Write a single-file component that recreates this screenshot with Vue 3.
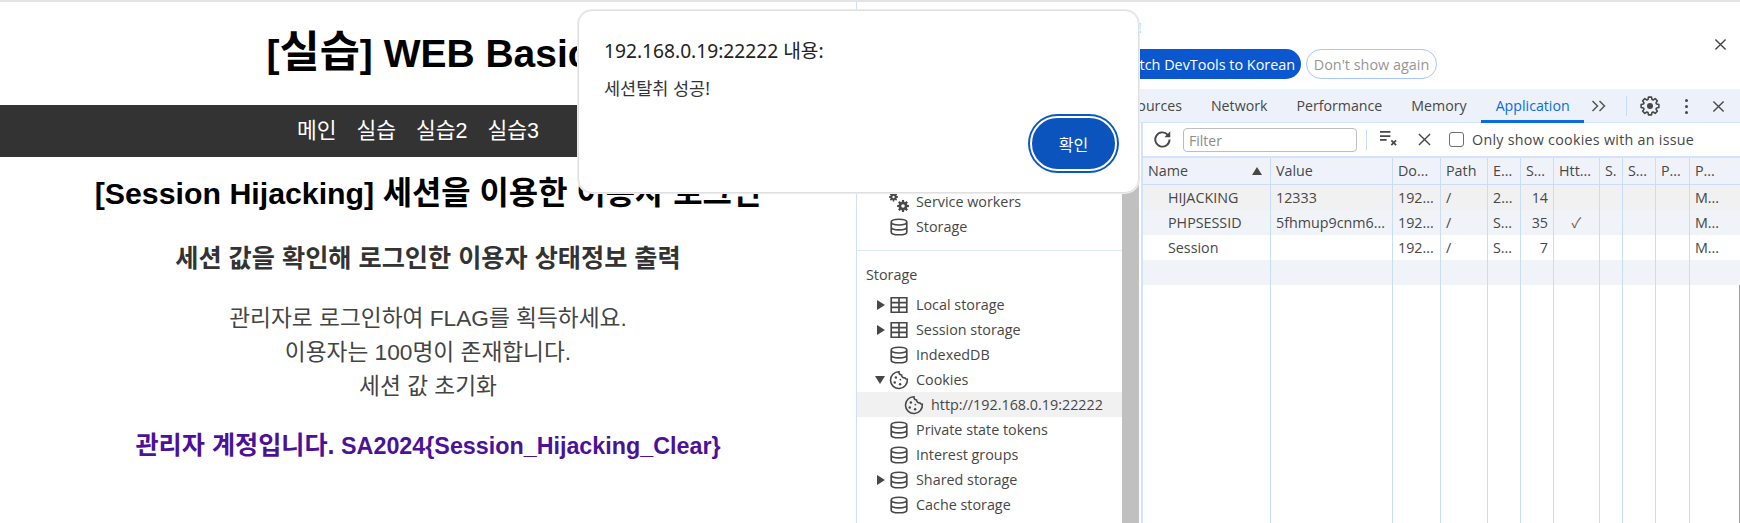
<template>
  <div class="screen">
    <svg class="defs" aria-hidden="true">
      <symbol id="i-db" viewBox="0 0 18 18">
        <path d="M2 4.600C2 2.900 5 2 9 2s7 .9 7 2.600v8.800c0 1.700-3 2.600-7 2.600s-7-.9-7-2.600z M2 4.600c0 1.700 3 2.600 7 2.600s7-.9 7-2.600 M2 9c0 1.700 3 2.600 7 2.600s7-.9 7-2.600" fill="none" stroke="#474747" stroke-width="1.500" />
      </symbol>
      <symbol id="i-table" viewBox="0 0 18 18">
        <path d="M2 2.500h14v13H2z M2 6.800h14 M2 11.100h14 M9 2.500v13" fill="none" stroke="#474747" stroke-width="1.500" />
      </symbol>
      <symbol id="i-cookie" viewBox="0 0 18 18">
        <path d="M9 1.500c-.3 1.900 1 3 2.300 3 0 1.600 1.300 2.800 3 2.600.5 1 1.300 1.300 2.200 1.200A7.600 7.600 0 1 1 9 1.500z" fill="none" stroke="#474747" stroke-width="1.400" />
        <circle cx="6.200" cy="6.800" r="1.100" fill="#474747" />
        <circle cx="5.200" cy="11.200" r="1.100" fill="#474747" />
        <circle cx="10" cy="12.800" r="1.100" fill="#474747" />
        <circle cx="10.200" cy="8.600" r=".8" fill="#474747" />
      </symbol>
      <symbol id="i-gears" viewBox="0 0 20 20">
        <path :d="gearPath(4.500, 5, 4.500, 3.200)" fill="#474747" />
        <circle cx="4.500" cy="5" r="1.200" fill="#fff" />
        <path :d="gearPath(14, 14, 6, 4.300)" fill="#474747" />
        <circle cx="14" cy="14" r="1.800" fill="#fff" />
      </symbol>
    </svg>

    <main class="page">
      <h1>[<span class="ko">실습</span>] WEB Basic</h1>
      <nav class="menu">
        <a v-for="link in menu" :key="link">{{ link }}</a>
      </nav>
      <h2>[Session Hijacking] <span class="ko">세션을 이용한 이용자 로그인</span></h2>
      <h3>세션 값을 확인해 로그인한 이용자 상태정보 출력</h3>
      <p class="guide">관리자로 로그인하여 FLAG를 획득하세요.</p>
      <p class="guide">이용자는 100명이 존재합니다.</p>
      <p class="guide">세션 값 초기화</p>
      <p class="flag"><span class="ko">관리자 계정입니다.</span> SA2024{Session_Hijacking_Clear}</p>
    </main>

    <section class="devtools">
      <div class="infobar">
        <p class="info-text">DevTools is now available in Korean!</p>
        <div class="info-actions">
          <button class="switch">Switch DevTools to Korean</button>
          <button class="dismiss">Don't show again</button>
        </div>
        <svg class="info-close" viewBox="0 0 14 14"><path d="M1.500 1.500l11 11M12.500 1.500l-11 11" stroke="#444" stroke-width="1.500" /></svg>
      </div>

      <div class="tabs">
        <span v-for="tab in tabs" :key="tab" class="tab" :class="{ active: tab === 'Application' }">{{ tab }}</span>
        <svg class="more" viewBox="0 0 16 12"><path d="M1.500 1l5 5-5 5M8.500 1l5 5-5 5" fill="none" stroke="#555" stroke-width="1.500" /></svg>
        <i class="tab-sep"></i>
        <svg class="gear" viewBox="0 0 20 20">
          <path :d="gearPath(10, 10, 9, 6.800)" fill="none" stroke="#474747" stroke-width="1.600" stroke-linejoin="round" />
          <circle cx="10" cy="10" r="3" fill="#474747" />
        </svg>
        <span class="dots"><i></i><i></i><i></i></span>
        <svg class="tabs-close" viewBox="0 0 14 14"><path d="M1.500 1.500l11 11M12.500 1.500l-11 11" stroke="#474747" stroke-width="1.500" /></svg>
      </div>

      <div class="panel">
        <aside class="sidebar">
          <div class="tree-row"><svg class="tree-icon"><use href="#i-gears" /></svg><span>Service workers</span></div>
          <div class="tree-row"><svg class="tree-icon"><use href="#i-db" /></svg><span>Storage</span></div>
          <div class="tree-sep"></div>
          <div class="tree-title">Storage</div>
          <div v-for="row in storage" :key="row.label" class="tree-row" :class="{ current: row.child }">
            <i v-if="row.arrow" class="arrow" :class="row.arrow"></i>
            <svg class="tree-icon" :class="{ nested: row.child }"><use :href="'#i-' + row.icon" /></svg>
            <span>{{ row.label }}</span>
          </div>
        </aside>
        <div class="scrollbar"></div>

        <div class="cookies">
          <div class="toolbar">
            <svg class="reload" viewBox="0 0 20 20"><path d="M16.700 10a6.800 6.800 0 1 1-1.700-4.500" fill="none" stroke="#474747" stroke-width="1.800" /><path d="M17.400 2.200v5.600h-5.600z" fill="#474747" /></svg>
            <div class="filter">Filter</div>
            <i class="tool-sep"></i>
            <svg class="clear" viewBox="0 0 20 18"><path d="M1 1h11M1 5.500h11M1 9.500h7" stroke="#474747" stroke-width="1.800" /><path d="M13 10l5 5M18 10l-5 5" stroke="#474747" stroke-width="1.800" /></svg>
            <svg class="tool-close" viewBox="0 0 14 14"><path d="M1 1l12 12M13 1 1 13" stroke="#474747" stroke-width="1.500" /></svg>
            <i class="check"></i>
            <span class="check-label">Only show cookies with an issue</span>
          </div>

          <div class="grid">
            <div class="grid-row head">
              <span v-for="(col, i) in columns" :key="i" class="cell">
                {{ col }}<i v-if="i === 0" class="sort"></i>
              </span>
            </div>
            <div v-for="(row, r) in cookies" :key="r" class="grid-row" :class="row.cls">
              <span v-for="(value, i) in row.cells" :key="i" class="cell" :class="{ name: i === 0, size: i === 5, http: i === 6 }">{{ value }}</span>
            </div>
            <div class="grid-row filler">
              <span v-for="(col, i) in columns" :key="i" class="cell"></span>
            </div>
          </div>
        </div>
      </div>
    </section>

    <div class="dialog">
      <div class="dialog-title">192.168.0.19:22222 내용:</div>
      <div class="dialog-message">세션탈취 성공!</div>
      <div class="dialog-actions">
        <button class="confirm">확인</button>
      </div>
    </div>
  </div>
</template>

<script setup>
const menu = ['메인', '실습', '실습2', '실습3']
const tabs = ['Elements', 'Console', 'Sources', 'Network', 'Performance', 'Memory', 'Application']

const storage = [
  { label: 'Local storage', icon: 'table', arrow: 'right' },
  { label: 'Session storage', icon: 'table', arrow: 'right' },
  { label: 'IndexedDB', icon: 'db' },
  { label: 'Cookies', icon: 'cookie', arrow: 'down' },
  { label: 'http://192.168.0.19:22222', icon: 'cookie', child: true },
  { label: 'Private state tokens', icon: 'db' },
  { label: 'Interest groups', icon: 'db' },
  { label: 'Shared storage', icon: 'db', arrow: 'right' },
  { label: 'Cache storage', icon: 'db' },
]

const columns = ['Name', 'Value', 'Do...', 'Path', 'E...', 'S...', 'Htt...', 'S.', 'S...', 'P...', 'P...']

const cookies = [
  { cls: 'selected', cells: ['HIJACKING', '12333', '192...', '/', '2...', '14', '', '', '', '', 'M...'] },
  { cls: 'stripe', cells: ['PHPSESSID', '5fhmup9cnm6...', '192...', '/', 'S...', '35', '✓', '', '', '', 'M...'] },
  { cls: '', cells: ['Session', '', '192...', '/', 'S...', '7', '', '', '', '', 'M...'] },
  { cls: 'stripe', cells: ['', '', '', '', '', '', '', '', '', '', ''] },
]

// eight-tooth cog outline
const gearPath = (cx, cy, outer, inner) => {
  const points = []
  for (let k = 0; k < 8; k++) {
    const a = (k * Math.PI) / 4
    const spots = [[inner, -0.3], [outer, -0.17], [outer, 0.17], [inner, 0.3]]
    for (const [r, d] of spots) {
      points.push((cx + r * Math.cos(a + d)).toFixed(2) + ' ' + (cy + r * Math.sin(a + d)).toFixed(2))
    }
  }
  return 'M' + points.join('L') + 'z'
}
</script>

<style>
html,
body {
  margin: 0;
  background: #fff;
  overflow: hidden;
}
</style>

<style scoped>
.screen {
  position: relative;
  display: flex;
  width: 1740px;
  height: 523px;
  overflow: hidden;
  border-top: 2px solid #e4e4e4;
  box-sizing: border-box;
  background: #fff;
}
.defs {
  position: absolute;
  width: 0;
  height: 0;
}

/* page on the left */
.page {
  width: 856px;
  flex: none;
  text-align: center;
  font-family: "Liberation Sans", "Noto Sans CJK KR", sans-serif;
  color: #333;
}
h1,
h2,
h3,
p {
  margin: 0;
}
h1 {
  height: 103px;
  line-height: 99px;
  font-size: 39px;
  color: #000;
}
h1 .ko {
  font-size: 1.120em;
}
.menu {
  display: flex;
  justify-content: center;
  gap: 20px;
  height: 52px;
  box-sizing: border-box;
  padding: 0 20px 5px 0;
  align-items: center;
  background: #333;
}
.menu a {
  color: #fff;
  font-size: 21.500px;
}
h2 {
  margin-top: 16px;
  height: 42px;
  line-height: 40px;
  font-size: 30.300px;
  color: #000;
}
h2 .ko {
  font-size: 1.053em;
}
h3 {
  margin-top: 25px;
  margin-bottom: 25px;
  line-height: 36px;
  font-size: 25.200px;
}
.guide {
  font-size: 22.700px;
  line-height: 34px;
  color: #444;
}
.flag {
  margin-top: 25px;
  height: 34px;
  line-height: 34px;
  font-size: 23.300px;
  font-weight: bold;
  color: #4b1199;
}
.flag .ko {
  font-size: 1.080em;
}

/* devtools on the right */
.devtools {
  flex: 1;
  display: flex;
  flex-direction: column;
  min-width: 0;
  border-left: 1px solid #cfe0f8;
  font-family: "Open Sans", "Noto Sans CJK KR", sans-serif;
  font-size: 13px;
  color: #474747;
}
.infobar {
  position: relative;
  height: 87px;
  box-sizing: border-box;
  padding-left: 40px;
}
.info-text {
  height: 47px;
  line-height: 52px;
  white-space: nowrap;
  text-indent: 8px;
  font-size: 14px;
  color: #222;
}
.info-actions {
  display: flex;
  justify-content: flex-end;
  gap: 5px;
  width: 540px;
}
.switch,
.dismiss {
  height: 30px;
  border-radius: 15px;
  font: inherit;
  font-size: 14.400px;
  padding: 0;
  white-space: nowrap;
}
.switch {
  width: 190px;
  border: 0;
  background: #0b57d0;
  color: #fff;
}
.dismiss {
  width: 131px;
  background: #fff;
  border: 1px solid #a8c7fa;
  color: #969696;
}
.info-close {
  position: absolute;
  right: 13px;
  top: 36px;
  width: 13px;
  height: 13px;
}
.tabs {
  display: flex;
  align-items: center;
  height: 34px;
  flex: none;
  padding-left: 86px;
  background: #edf2fa;
  box-shadow: inset 0 -1px #d3e3fb;
  white-space: nowrap;
}
.tab {
  height: 34px;
  line-height: 33px;
  padding: 0 14.500px;
  font-size: 14.200px;
  box-sizing: border-box;
}
.tab.active {
  color: #0b6be3;
  border-bottom: 3px solid #0b6be3;
}
.more {
  width: 16px;
  height: 12px;
  margin-left: 7px;
}
.tab-sep {
  width: 1px;
  height: 20px;
  margin: 0 13px 0 19px;
  background: #c9daf5;
}
.gear {
  width: 20px;
  height: 20px;
}
.dots {
  display: flex;
  flex-direction: column;
  gap: 3px;
  margin-left: 25px;
}
.dots i {
  width: 3px;
  height: 3px;
  border-radius: 50%;
  background: #474747;
}
.tabs-close {
  width: 13px;
  height: 13px;
  margin-left: 24px;
}
.panel {
  flex: 1;
  display: flex;
  min-height: 0;
}
.sidebar {
  width: 265px;
  flex: none;
  box-sizing: border-box;
  padding-top: 66px;
  font-size: 14.350px;
}
.tree-row {
  position: relative;
  display: flex;
  align-items: center;
  height: 25px;
  padding-left: 32px;
  white-space: nowrap;
}
.tree-row.current {
  background: #f1f1f1;
}
.tree-icon {
  width: 20px;
  height: 20px;
  margin-right: 7px;
  flex: none;
}
.tree-icon.nested {
  margin-left: 15px;
  margin-right: 7px;
}
.tree-sep {
  height: 1px;
  margin-top: 11px;
  background: #dde7f7;
}
.tree-title {
  height: 25px;
  line-height: 25px;
  margin: 11px 0 5px;
  padding-left: 9px;
}
.arrow {
  position: absolute;
  width: 0;
  height: 0;
  border-style: solid;
  border-color: transparent;
}
.arrow.right {
  left: 20px;
  top: 8px;
  border-width: 5px 0 5px 8px;
  border-left-color: #474747;
}
.arrow.down {
  left: 18px;
  top: 9px;
  border-width: 8px 5.500px 0;
  border-top-color: #474747;
}
.scrollbar {
  width: 17px;
  flex: none;
  background: #c0c0c0;
}
.cookies {
  flex: 1;
  min-width: 0;
  display: flex;
  flex-direction: column;
  margin-left: 2px;
  border-left: 2px solid #d3e3fb;
}
.toolbar {
  position: relative;
  display: flex;
  align-items: center;
  height: 33px;
  flex: none;
  border-bottom: 2px solid #d3e3fb;
}
.reload {
  width: 21px;
  height: 21px;
  margin-left: 9px;
}
.filter {
  width: 174px;
  height: 24px;
  line-height: 24px;
  margin-left: 10px;
  box-sizing: border-box;
  padding-left: 5px;
  border: 1px solid #bdbdbd;
  border-radius: 4px;
  font-size: 14px;
  color: #8c8c8c;
}
.tool-sep {
  width: 1px;
  height: 20px;
  margin: 0 12px 0 9px;
  background: #c9daf5;
}
.clear {
  width: 19px;
  height: 17px;
}
.tool-close {
  width: 13px;
  height: 13px;
  margin-left: 20px;
}
.check {
  width: 13px;
  height: 13px;
  margin-left: 18px;
  border: 1px solid #6f6f6f;
  border-radius: 3px;
}
.check-label {
  margin-left: 8px;
  font-size: 14.300px;
  letter-spacing: .27px;
  white-space: nowrap;
}
.grid {
  flex: 1;
  display: flex;
  flex-direction: column;
  min-height: 0;
}
.grid-row {
  display: grid;
  grid-template-columns: 128px 122px 48px 47px 33px 33px 46px 23px 33px 34px 1fr;
  height: 25px;
  flex: none;
}
.grid-row.head {
  height: 26px;
  background: #eff3f9;
  border-bottom: 1px solid #c9dcf8;
}
.grid-row.selected {
  background: #f1f1f1;
}
.grid-row.stripe {
  background: #f0f4f9;
}
.grid-row.filler {
  flex: 1;
}
.cell {
  position: relative;
  box-sizing: border-box;
  padding: 0 5px;
  line-height: 25px;
  font-size: 14.300px;
  white-space: nowrap;
  overflow: hidden;
  border-right: 1px solid #c9dcf8;
}
.cell:last-child {
  border-right: 0;
}
.filler .cell:last-child {
  border-right: 1px solid #9e9e9e;
}
.cell.name {
  padding-left: 25px;
}
.cell.size {
  text-align: right;
}
.cell.http {
  text-align: center;
  color: #7a5a4a;
}
.sort {
  position: absolute;
  right: 8px;
  top: 9px;
  width: 0;
  height: 0;
  border-style: solid;
  border-width: 0 5px 8px;
  border-color: transparent transparent #474747;
}

/* alert */
.dialog {
  position: absolute;
  left: 578px;
  top: 8px;
  width: 561px;
  height: 183px;
  box-sizing: border-box;
  padding: 0 21px 0 25px;
  border: 1px solid #e0e0e0;
  border-radius: 14px;
  box-shadow: 0 0 0 1px #ececec;
  background: #fff;
  font-family: "Noto Sans", "Noto Sans CJK KR", sans-serif;
  color: #222;
}
.dialog-title {
  margin-top: 27px;
  line-height: 26px;
  font-size: 19.200px;
}
.dialog-message {
  margin-top: 12px;
  line-height: 24px;
  font-size: 17.500px;
  color: #333;
}
.dialog-actions {
  display: flex;
  justify-content: flex-end;
  margin-top: 16px;
}
.confirm {
  width: 87px;
  height: 55px;
  box-sizing: border-box;
  border: 2px solid #fff;
  border-radius: 28px;
  box-shadow: 0 0 0 2px #0b57c4;
  background: #0b54bd;
  color: #fff;
  font: inherit;
  font-size: 16px;
}
</style>
